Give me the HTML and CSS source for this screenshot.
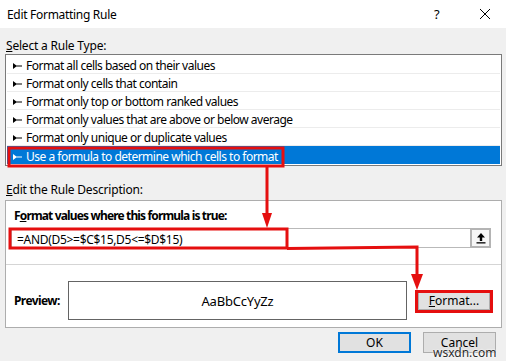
FILE: index.html
```html
<!DOCTYPE html>
<html lang="en">
<head>
    <meta charset="UTF-8">
    <title>Edit Formatting Rule</title>
    <link rel="stylesheet" href="styles.css">
</head>
<body>
    <div class="titlebar">
        <span class="title">Edit Formatting Rule</span>
        <span class="help">?</span>
        <svg class="close" width="12" height="12" viewBox="0 0 12 12">
            <path d="M1 1 L11 11 M11 1 L1 11" stroke="#000" stroke-width="1" fill="none"/>
        </svg>
    </div>

    <div class="dialog">
        <div class="label"><u>S</u>elect a Rule Type:</div>
        <ul class="rules">
            <li><svg class="bullet" viewBox="0 0 9 6"><path d="M0 0 L4 3 L0 6 Z M3 2.5 H9 V3.5 H3 Z"/></svg>Format all cells based on their values</li>
            <li><svg class="bullet" viewBox="0 0 9 6"><path d="M0 0 L4 3 L0 6 Z M3 2.5 H9 V3.5 H3 Z"/></svg>Format only cells that contain</li>
            <li><svg class="bullet" viewBox="0 0 9 6"><path d="M0 0 L4 3 L0 6 Z M3 2.5 H9 V3.5 H3 Z"/></svg>Format only top or bottom ranked values</li>
            <li><svg class="bullet" viewBox="0 0 9 6"><path d="M0 0 L4 3 L0 6 Z M3 2.5 H9 V3.5 H3 Z"/></svg>Format only values that are above or below average</li>
            <li><svg class="bullet" viewBox="0 0 9 6"><path d="M0 0 L4 3 L0 6 Z M3 2.5 H9 V3.5 H3 Z"/></svg>Format only unique or duplicate values</li>
            <li class="selected"><svg class="bullet" viewBox="0 0 9 6"><path d="M0 0 L4 3 L0 6 Z M3 2.5 H9 V3.5 H3 Z"/></svg>Use a formula to determine which cells to format</li>
        </ul>

        <div class="label label-desc"><u>E</u>dit the Rule Description:</div>
        <div class="group">
            <div class="group-top">
                <div class="heading">F<u>o</u>rmat values where this formula is true:</div>
                <div class="formula">
                    <span class="formula-text">=AND(D5&gt;=$C$15,D5&lt;=$D$15)</span>
                    <span class="collapse">
                        <svg width="10" height="12" viewBox="0 0 10 12">
                            <path d="M5 1 L9 5.5 H6.2 V9 H3.8 V5.5 H1 Z" fill="#000"/>
                            <rect x="0.5" y="10.2" width="9" height="1.3" fill="#000"/>
                        </svg>
                    </span>
                </div>
            </div>
            <div class="preview-row">
                <span class="heading">Preview:</span>
                <div class="preview">AaBbCcYyZz</div>
                <span class="btn format-btn"><u>F</u>ormat...</span>
            </div>
        </div>

        <div class="actions">
            <span class="btn ok">OK</span>
            <span class="btn cancel">Cancel</span>
        </div>
    </div>

    <!-- red annotation marks -->
    <svg class="marks" width="506" height="361" viewBox="0 0 506 361">
        <g fill="none" stroke="#e50f0f" stroke-width="3">
            <rect x="9" y="148" width="274" height="18"/>
            <path d="M267 167 V216"/>
            <rect x="10" y="229" width="277" height="19"/>
            <path d="M287 248.5 L417 247 V278"/>
            <rect x="416.5" y="291.5" width="75" height="20"/>
        </g>
        <g fill="#e50f0f">
            <path d="M262 213 L272 213 L267 228 Z"/>
            <path d="M411 274 L423 274 L417 290 Z"/>
        </g>
    </svg>
    <span class="watermark">wsxdn.com</span>
</body>
</html>
```

FILE: styles.css
```css
body {
    margin: 0;
    width: 506px;
    height: 361px;
    overflow: hidden;
    background: #f0f0f0;
    font-family: "Noto Sans", "Segoe UI", sans-serif;
    font-size: 12px;
    letter-spacing: -0.5px;
    color: #000;
    position: relative;
}

u {
    text-decoration: underline;
    text-underline-offset: 1px;
}

/* Title bar */
.titlebar {
    height: 28px;
    background: #fff;
    display: flex;
    align-items: center;
    padding-left: 7px;
}

.title {
    flex: 1;
    letter-spacing: -0.3px;
}

.help {
    width: 12px;
    margin-right: 33px;
    font-size: 13px;
}

.close {
    margin-right: 15px;
}

.dialog {
    padding: 0 4px 0 5px;
}

.label {
    margin-top: 10px;
    padding-left: 1px;
    height: 16px;
    line-height: 16px;
    letter-spacing: -0.2px;
}

.label-desc {
    margin-top: 16px;
    margin-bottom: 2px;
}

/* Rule type list */
.rules {
    list-style: none;
    margin: 0;
    padding: 1px;
    border: 1px solid #7a7a7a;
    background: #fff;
}

.rules li {
    height: 14px;
    line-height: 14px;
    padding: 3px 0 0 6px;
    border-bottom: 1px solid #ececec;
    display: flex;
    align-items: center;
    white-space: nowrap;
}

.rules li.selected {
    height: 15px;
    border-bottom: none;
    background: #0078d7;
    color: #fff;
}

.bullet {
    width: 9px;
    height: 6px;
    margin-right: 4px;
    fill: #000;
}

.selected .bullet {
    fill: #fff;
}

/* Rule description group */
.group {
    border: 1px solid #adadad;
    background: #fff;
}

.group-top {
    padding: 7px 10px 16px 5px;
    border-bottom: 1px solid #d5d5d5;
}

.heading {
    font-weight: bold;
    line-height: 16px;
    letter-spacing: -0.85px;
}

.group-top .heading {
    padding-left: 3px;
}

.formula {
    margin-top: 4px;
    height: 20px;
    box-sizing: border-box;
    border: 1px solid #b9b9b9;
    display: flex;
    align-items: center;
}

.formula-text {
    flex: 1;
    padding: 2px 0 0 5px;
    letter-spacing: -0.3px;
}

.collapse {
    width: 21px;
    height: 20px;
    box-sizing: border-box;
    margin-right: -1px;
    border: 2px solid #b4b4b4;
    background: #f6f6f6;
    display: flex;
    align-items: center;
    justify-content: center;
}

.preview-row {
    display: flex;
    align-items: center;
    padding: 16px 0 7px 8px;
}

.preview-row .heading {
    width: 44px;
    white-space: nowrap;
    letter-spacing: -0.6px;
}

.preview {
    margin-left: 10px;
    width: 339px;
    height: 39px;
    box-sizing: border-box;
    border: 1px solid #646464;
    display: flex;
    align-items: center;
    justify-content: center;
    font-size: 13px;
    letter-spacing: -0.2px;
}

.btn {
    display: flex;
    align-items: center;
    justify-content: center;
    box-sizing: border-box;
    background: #e1e1e1;
    border: 1px solid #adadad;
    letter-spacing: 0;
}

.format-btn {
    margin-left: 11px;
    width: 72px;
    height: 18px;
}

/* Bottom buttons */
.actions {
    display: flex;
    justify-content: flex-end;
    gap: 12px;
    margin-top: 4px;
    padding-right: 6px;
}

.actions .btn {
    width: 73px;
    height: 21px;
}

.actions .ok {
    border: 2px solid #0078d7;
}

.actions .cancel {
    align-items: flex-start;
    padding-top: 1px;
}

/* Overlays */
.marks {
    position: absolute;
    top: 0;
    left: 0;
    pointer-events: none;
}

.watermark {
    position: absolute;
    left: 433px;
    top: 344px;
    font-size: 12px;
    letter-spacing: 0;
    color: #2b2b2b;
    text-shadow: 0 0 2px #fff, 0 0 2px #fff;
}
```
